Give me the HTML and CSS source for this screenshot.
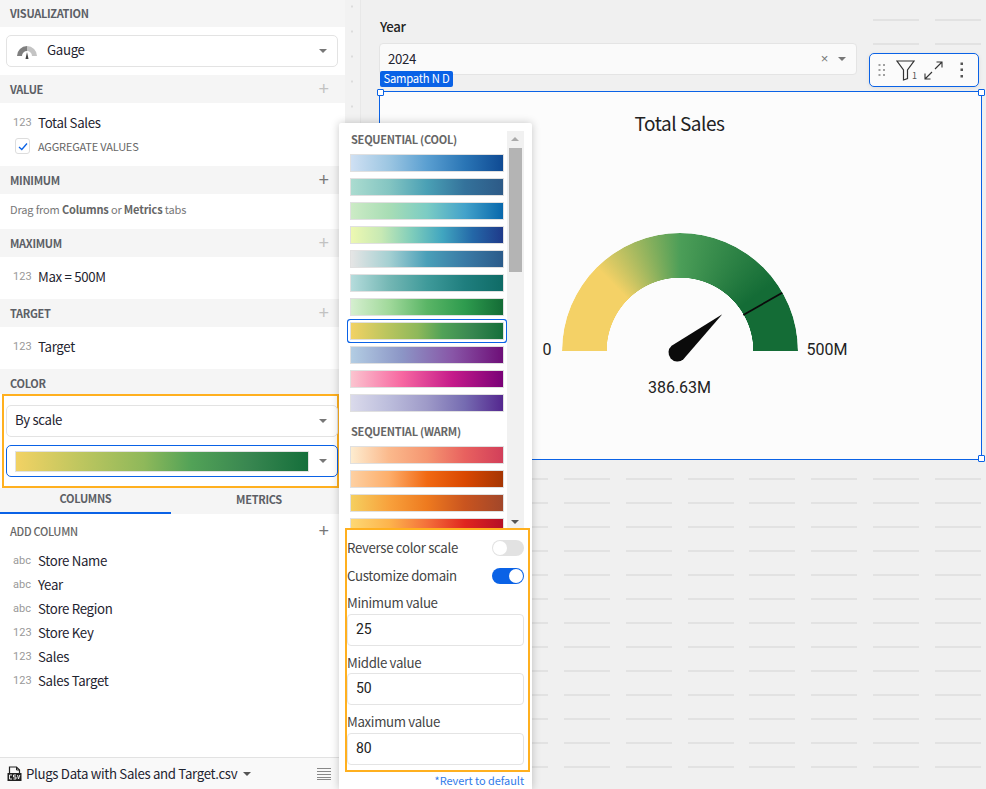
FILE: index.html
```html
<!DOCTYPE html>
<html lang="en">
<head>
<meta charset="utf-8">
<title>Gauge settings</title>
<link rel="stylesheet" href="styles.css">
</head>
<body>
<div class="app">
  <aside class="panel">
    <div class="head">VISUALIZATION</div>
    <div class="body-select">
      <div class="select">
        <svg class="gauge-icon" width="20" height="15" viewBox="0 0 20 15"><path d="M0 12 A10 10 0 0 1 10 2 V7 A5 5 0 0 0 5 12 Z" fill="#7f7f7f"/><path d="M10 2 A10 10 0 0 1 20 12 H15 A5 5 0 0 0 10 7 Z" fill="#c4c4c4"/><path d="M10 8 L11.500 15 H8.500 Z" fill="#444"/></svg>
        <span class="sel-text">Gauge</span><i class="caret"></i>
      </div>
    </div>
    <div class="head">VALUE<b class="plus faint">+</b></div>
    <div class="body-value">
      <div class="field"><span class="type">123</span>Total Sales</div>
      <div class="check-row">
        <span class="check"><svg width="10" height="9" viewBox="0 0 10 9"><path d="M1 5 L3.800 7.500 L9 1.500" fill="none" stroke="#0a62e6" stroke-width="1.300"/></svg></span>AGGREGATE VALUES
      </div>
    </div>
    <div class="head">MINIMUM<b class="plus">+</b></div>
    <div class="hint">Drag from <b>Columns</b> or <b>Metrics</b> tabs</div>
    <div class="head">MAXIMUM<b class="plus faint">+</b></div>
    <div class="body-one"><div class="field"><span class="type">123</span>Max = 500M</div></div>
    <div class="head">TARGET<b class="plus faint">+</b></div>
    <div class="body-one"><div class="field"><span class="type">123</span>Target</div></div>
    <div class="head head-color">COLOR</div>
    <div class="color-box">
      <div class="select"><span class="plain">By scale</span><i class="caret"></i></div>
      <div class="select focus"><span class="scale-preview"></span><i class="caret"></i></div>
    </div>
    <div class="tabs">
      <div class="tab active">COLUMNS</div>
      <div class="tab second">METRICS</div>
    </div>
    <div class="add-col">ADD COLUMN<b class="plus">+</b></div>
    <div class="field"><span class="type">abc</span>Store Name</div>
    <div class="field"><span class="type">abc</span>Year</div>
    <div class="field"><span class="type">abc</span>Store Region</div>
    <div class="field"><span class="type">123</span>Store Key</div>
    <div class="field"><span class="type">123</span>Sales</div>
    <div class="field"><span class="type">123</span>Sales Target</div>
    <div class="foot">
      <svg width="15" height="16" viewBox="0 0 15 16"><path d="M2.500 7 V1 H9.500 L12.500 4 V7" fill="none" stroke="#222" stroke-width="1.200"/><path d="M9.500 1 V4 H12.500" fill="none" stroke="#222"/><rect x="0.500" y="7" width="14" height="8" fill="#222"/><path d="M5 9 H2.500 V13 H5 M9 9 H6.500 V11 H9 V13 H6.500 M10.500 9 L11.500 13 L12.800 9" fill="none" stroke="#fff" stroke-width="0.900"/></svg>
      <span class="foot-name">Plugs Data with Sales and Target.csv</span><i class="caret dark"></i>
      <svg class="list-icon" width="14" height="12" viewBox="0 0 14 12"><path d="M0 .5 H14 M0 3.500 H14 M0 6.500 H14 M0 9.500 H14 M0 11.500 H14" stroke="#888" stroke-width="1"/></svg>
    </div>
  </aside>

  <main class="canvas">
    <div class="ruler"></div>
    <div class="sheet">
      <div class="dashes top"></div>
      <div class="dashes bottom"></div>
      <div class="filter-label">Year</div>
      <div class="filter">
        <span>2024</span><span class="clear">×</span><i class="caret"></i>
      </div>
      <div class="badge">Sampath N D</div>
      <div class="toolbar">
        <svg width="8" height="14" viewBox="0 0 8 14"><path d="M.5 1 H2.500 V3 H.5 Z M5 1 H7 V3 H5 Z M.5 6 H2.500 V8 H.5 Z M5 6 H7 V8 H5 Z M.5 11 H2.500 V13 H.5 Z M5 11 H7 V13 H5 Z" fill="#a0a0a0"/></svg>
        <span class="filter-icon"><svg width="19" height="21" viewBox="0 0 19 21"><path d="M1 1 H18 L11.500 10 V18.500 L7.500 20 V10 Z" fill="none" stroke="#333" stroke-width="1.200"/></svg><em>1</em></span>
        <svg width="19" height="19" viewBox="0 0 19 19"><path d="M11 8 L18 1 M12.500 1 H18 V6.500 M8 11 L1 18 M1 12.500 V18 H6.500" fill="none" stroke="#333" stroke-width="1.100"/></svg>
        <svg class="dots" width="4" height="16" viewBox="0 0 4 16"><path d="M.5 .5 H3 V3 H.5 Z M.5 6.500 H3 V9 H.5 Z M.5 13 H3 V15.500 H.5 Z" fill="#555"/></svg>
      </div>
      <section class="chart">
        <i class="handle tl"></i><i class="handle tr"></i><i class="handle br"></i>
        <h2 class="chart-title">Total Sales</h2>
        <div class="gauge-row">
          <span class="g-min">0</span>
          <div class="gauge">
            <div class="arc"></div>
            <svg class="needle" width="250" height="140" viewBox="555 225 250 140"><path d="M743.300 314 L782.300 291.700" stroke="#0b0b0b" stroke-width="1.800"/><path d="M722.300 313.300 L683.400 358.300 A9 9 0 1 1 671.600 344.700 Z" fill="#0b0b0b"/></svg>
          </div>
          <span class="g-max">500M</span>
        </div>
        <div class="g-value">386.63M</div>
      </section>
    </div>
  </main>

  <div class="popup">
    <div class="scale-area">
      <div class="scale-list">
        <div class="group-title">SEQUENTIAL (COOL)</div>
        <div class="swatches">
          <div class="swatch c1"></div><div class="swatch c2"></div><div class="swatch c3"></div><div class="swatch c4"></div>
          <div class="swatch c5"></div><div class="swatch c6"></div><div class="swatch c7"></div><div class="swatch c8 sel"></div>
          <div class="swatch c9"></div><div class="swatch c10"></div><div class="swatch c11"></div>
        </div>
        <div class="group-title warm">SEQUENTIAL (WARM)</div>
        <div class="swatches">
          <div class="swatch w1"></div><div class="swatch w2"></div><div class="swatch w3"></div><div class="swatch w4"></div>
        </div>
      </div>
      <div class="scrollbar">
        <i class="sb-up"></i><div class="sb-thumb"></div><i class="sb-down"></i>
      </div>
    </div>
    <div class="domain-box">
      <div class="toggle-row"><span>Reverse color scale</span><span class="toggle"></span></div>
      <div class="toggle-row"><span>Customize domain</span><span class="toggle on"></span></div>
      <label class="dlabel first">Minimum value</label><div class="dinput">25</div>
      <label class="dlabel">Middle value</label><div class="dinput">50</div>
      <label class="dlabel">Maximum value</label><div class="dinput">80</div>
    </div>
    <div class="revert">*Revert to default</div>
  </div>
</div>
</body>
</html>
```
FILE: styles.css
```css
* { box-sizing: border-box; }
html, body { margin: 0; height: 100%; }
body {
  font-family: "Noto Sans CJK SC", "Source Sans Pro", "Noto Sans", sans-serif;
  font-size: 13.250px;
  letter-spacing: -.33px;
  color: #1f2430;
  background: #f0f0f0;
  overflow: hidden;
}
.app { display: flex; position: relative; width: 986px; height: 789px; overflow: hidden; }

/* left panel */
.panel { width: 345px; height: 789px; background: #fff; display: flex; flex-direction: column; flex: none; }
.head {
  height: 28px; background: #f5f5f5; padding: 0 10px; display: flex; align-items: center;
  justify-content: space-between; font-size: 11px; letter-spacing: -.3px; font-weight: 700; color: #5c5f66; line-height: 28px; flex: none;
}
.head:first-child { height: 27px; line-height: 25px; }
.plus { font-weight: 400; font-size: 18px; color: #777; margin-right: 6px; line-height: 20px; font-family: "Liberation Sans", sans-serif; letter-spacing: 0; }
.plus.faint { color: #c2c2c2; }
.body-select { padding: 8px 7px 8px 6px; height: 48px; flex: none; }
.select {
  height: 32px; border: 1px solid #e3e3e3; border-radius: 5px; background: #fff;
  display: flex; align-items: center; padding-left: 8px; position: relative;
}
.gauge-icon { margin: 0 0 0 2px; }
.sel-text { margin: -3px 0 0 10px; line-height: 20px; }
.plain { line-height: 20px; margin-top: -3px; }
.caret {
  width: 0; height: 0; border: 4px solid transparent; border-top: 4.500px solid #777; border-bottom: 0;
  margin-left: auto; margin-right: 10px; display: block; flex: none;
}
.caret.dark { margin-left: 6px; margin-right: 0; border-top-color: #555; }
.body-value { height: 63px; padding-top: 7px; flex: none; }
.field { display: flex; align-items: center; height: 24px; padding: 1px 0 0 13px; line-height: 24px; flex: none; }
.type { width: 25px; font-family: Roboto, sans-serif; font-size: 11px; color: #999; flex: none; letter-spacing: .1px; }
.check-row { display: flex; align-items: center; height: 24px; padding-left: 15px; font-size: 11px; letter-spacing: -.2px; color: #666; line-height: 24px; }
.check {
  width: 15px; height: 16px; border: 1px solid #ddd; border-radius: 3px; margin-right: 8px;
  display: flex; align-items: center; justify-content: center;
}
.hint { height: 35px; flex: none; padding: 0 10px; font-size: 11px; letter-spacing: -.15px; line-height: 31px; color: #777; }
.hint b { font-weight: 700; color: #666; }
.body-one { height: 42px; padding-top: 7px; flex: none; }
.head-color { height: 25px; line-height: 28px; align-items: flex-start; }
.color-box {
  height: 94px; margin: 0 6px 0 2px; width: 337px; border: 2px solid #ffb01f; background: #fff;
  padding: 9px 0 0 2px; flex: none;
}
.color-box .select { width: 332px; padding-left: 8px; }
.color-box .select + .select { margin-top: 8px; }
.select.focus { border-color: #0a62e6; }
.scale-preview {
  width: 294px; height: 21px; border: 1px solid #e2e2e2;
  background: linear-gradient(to right, #f2d264, #bec65f 22%, #8eb85a 44%, #52a257 60%, #388650 80%, #156f3b);
}
.tabs { height: 26px; background: #f5f5f5; display: flex; flex: none; font-size: 11px; letter-spacing: -.3px; font-weight: 700; color: #5c5f66; }
.tab { width: 172px; text-align: center; line-height: 20px; height: 26px; }
.tab.active { border-bottom: 2px solid #0a62e6; }
.tab.second { line-height: 22px; width: 175px; padding-left: 2px; }
.add-col {
  height: 34px; padding: 0 10px; display: flex; align-items: center; justify-content: space-between;
  font-size: 11px; letter-spacing: -.3px; font-weight: 500; color: #666; flex: none; line-height: 34px;
}
.foot {
  margin-top: auto; height: 32px; border-top: 1px solid #e2e2e2; background: #f9f9f9; display: flex; align-items: center;
  padding: 0 14px 0 7px; flex: none; line-height: 20px;
}
.foot-name { margin: 1px 0 0 4px; }
.list-icon { margin-left: auto; }

/* canvas */
.canvas { flex: 1; display: flex; height: 789px; background: #f0f0f0; }
.ruler {
  width: 16px; flex: none; background-color: #f2f2f2; border-right: 1px solid #e8e8e8;
  background-image: radial-gradient(circle, #dcdcdc 1px, transparent 1.200px);
  background-size: 16px 25px; background-position: -1px -6px;
}
.sheet { flex: 1; position: relative; padding: 18px 5px 0 18px; }
.dashes {
  position: absolute;
  background: repeating-linear-gradient(to bottom, #e2e2e2 0 2px, transparent 2px 24px);
  -webkit-mask-image: repeating-linear-gradient(to right, #000 0 46px, transparent 46px 61.750px);
  mask-image: repeating-linear-gradient(to right, #000 0 46px, transparent 46px 61.750px);
}
.dashes.top { left: 512px; top: 19px; width: 108px; height: 26px; }
.dashes.bottom { left: 17.750px; top: 478px; width: 602px; height: 311px; }
.filter-label { font-weight: 500; line-height: 18px; color: #222; position: relative; padding-left: 1px; }
.filter {
  position: relative; width: 478px; height: 32px; margin-top: 7px; border: 1px solid #e4e4e4; border-radius: 4px;
  background: #fafafa; display: flex; align-items: center; padding-left: 8px; line-height: 20px;
}
.clear { margin-left: auto; color: #777; font-family: "Liberation Sans", sans-serif; font-size: 13px; margin-right: 0; }
.filter .caret { margin-left: 10px; margin-right: 10px; }
.badge {
  position: absolute; left: 19px; top: 71px; width: 73px; height: 16px; background: #0a62e6; color: #fff; font-size: 11.250px;
  line-height: 15px; text-align: center; border-radius: 2px; z-index: 3; letter-spacing: -.2px;
}
.toolbar {
  position: absolute; left: 508px; top: 53px; width: 110px; height: 34px; background: #fbfbfb; border: 1.500px solid #0a62e6;
  border-radius: 5px; display: flex; align-items: center; padding-left: 8px; z-index: 3; box-shadow: 0 1px 4px rgba(0,0,0,.08);
}
.filter-icon { position: relative; margin-left: 10px; width: 20px; height: 21px; display: block; }
.filter-icon em { position: absolute; left: 16px; top: 11px; font-style: normal; font-size: 9px; line-height: 10px; color: #555; }
.toolbar > svg:nth-of-type(2) { margin-left: 8px; }
.dots { margin-left: 17px; }
.chart {
  position: relative; width: 603px; height: 369px; margin-top: 16px; margin-left: 0;
  background: #fcfcfc; border: 1.500px solid #0a62e6; display: flex; flex-direction: column; align-items: center;
}
.handle { position: absolute; width: 7px; height: 7px; border: 1.500px solid #0a62e6; background: #fff; border-radius: 1px; z-index: 2; }
.tl { left: -3px; top: -3px; }
.tr { right: -4px; top: -3px; }
.br { right: -4px; bottom: -3px; }
.chart-title { margin: 17px 2px 0 0; font-size: 19px; letter-spacing: -.45px; font-weight: 400; line-height: 28px; color: #222; }
.gauge-row { display: flex; align-items: flex-end; margin: 96px 2px 0 0; font-family: Roboto, sans-serif; font-size: 16px; letter-spacing: 0; color: #222; }
.gauge { position: relative; width: 236px; height: 118px; }
.arc {
  width: 236px; height: 118px; border-radius: 118px 118px 0 0;
  background: conic-gradient(from -90deg at 50% 100%, #f4d166 0deg, #f4d166 45deg, #4c9e58 90deg, #146c36 144deg, #146c36 180deg, #146c36 360deg);
  -webkit-mask-image: radial-gradient(circle at 50% 100%, transparent 73px, #000 73.500px);
  mask-image: radial-gradient(circle at 50% 100%, transparent 73px, #000 73.500px);
}
.needle { position: absolute; left: -7px; top: -7px; overflow: visible; }
.g-min { width: 60px; padding-right: 10px; text-align: right; line-height: 18px; margin-bottom: -8px; }
.g-max { width: 60px; padding-left: 9px; line-height: 18px; margin-bottom: -8px; }
.g-value { font-family: Roboto, sans-serif; font-size: 16px; letter-spacing: 0; line-height: 18px; color: #222; margin: 28px 2px 0 0; }

/* popup */
.popup {
  position: absolute; left: 339px; top: 123px; width: 193px; height: 666px; background: #fff;
  box-shadow: 0 0 8px rgba(0,0,0,.22); z-index: 5; border-radius: 2px 2px 0 0;
}
.scale-area { height: 405px; display: flex; overflow: hidden; }
.scale-list { width: 168px; padding: 8px 0 0 11px; overflow: hidden; height: 405px; flex: none; }
.group-title { font-size: 11px; letter-spacing: -.25px; font-weight: 700; color: #666; line-height: 16px; margin: 0 0 7px 1px; }
.group-title.warm { margin-top: 11px; }
.swatches { display: flex; flex-direction: column; gap: 6px; }
.swatch { width: 154px; height: 18px; border: 1px solid #e0e0e0; flex: none; }
.swatch.sel { box-shadow: 0 0 0 2px #fff, 0 0 0 3px #0a62e6; border-radius: 1px; }
.c1 { background: linear-gradient(to right, #cfe0f3, #9cc6e2, #5a9fd1, #2a75b5, #0f4a93); }
.c2 { background: linear-gradient(to right, #abdcd0, #84c5c2, #4aa0b5, #34729b, #2d5a87); }
.c3 { background: linear-gradient(to right, #ccebc5, #a8ddb5, #7bccc4, #43a2ca, #0868ac); }
.c4 { background: linear-gradient(to right, #edf8b1, #c7e9b4, #7fcdbb, #41a6c0, #2468a8, #1f3a8a); }
.c5 { background: linear-gradient(to right, #e5e5e5, #a5d0d2, #4a9fb8, #3a7aa5, #2b5b8a); }
.c6 { background: linear-gradient(to right, #b5dcdc, #74b7b4, #3f9a9a, #1f7e7e, #0f6b66); }
.c7 { background: linear-gradient(to right, #d5efcf, #a1d99b, #5ab566, #2e9b4e, #146c36); }
.c8 { background: linear-gradient(to right, #f2d264, #bec65f 22%, #8eb85a 44%, #52a257 60%, #388650 80%, #156f3b); }
.c9 { background: linear-gradient(to right, #b3cde3, #8c96c6, #8856a7, #6e0f78); }
.c10 { background: linear-gradient(to right, #fbc4cf, #f768a1, #c51b8a, #7a0177); }
.c11 { background: linear-gradient(to right, #dadaeb, #bcbddc, #9e9ac8, #756bb1, #54278f); }
.w1 { background: linear-gradient(to right, #fdeccf, #fbb98c, #f59671, #e8615f, #d23f5a); }
.w2 { background: linear-gradient(to right, #fdd0a2, #fdae6b, #f16913, #d94801, #a63603); }
.w3 { background: linear-gradient(to right, #f5cf5f, #f8a13c, #ee7a1f, #c9541f, #a2472a); }
.w4 { background: linear-gradient(to right, #fdd873, #fdb44d, #f4703a, #e0261f, #b50f26); }
.scrollbar {
  width: 17px; height: 397px; margin-top: 8px; background: #f1f1f1; position: relative; padding-top: 17px;
}
.sb-thumb { width: 13px; height: 124px; margin-left: 2px; background: #b4b4b4; }
.sb-up, .sb-down { position: absolute; left: 4px; width: 0; height: 0; border: 4px solid transparent; border-top: 0; }
.sb-up { top: 6px; border-bottom: 4px solid #aaa; }
.sb-down { bottom: 4px; border-bottom: 0; border-top: 4px solid #555; }
.domain-box { margin-left: 6px; width: 185px; height: 244px; border: 2px solid #ffb01f; background: #fff; padding: 4px 4px 0 0; position: relative; }
.toggle-row { display: flex; align-items: center; justify-content: space-between; height: 28px; line-height: 28px; color: #444; }
.toggle-row span:first-child { margin-top: -1px; }
.toggle { width: 32px; height: 16px; border-radius: 8px; background: #e2e2e2; position: relative; display: block; }
.toggle::after { content: ""; position: absolute; left: 1px; top: 1px; width: 14px; height: 14px; border-radius: 50%; background: #fff; }
.toggle.on { background: #0a62e6; }
.toggle.on::after { left: 17px; }
.dlabel { display: block; line-height: 18px; height: 18px; color: #444; margin-top: 8px; }
.dlabel.first { margin-top: 4px; }
.dinput {
  height: 32px; border: 1px solid #e4e4e4; border-radius: 4px; padding-left: 8px; margin-top: 1.500px;
  font-family: Roboto, sans-serif; font-size: 14px; letter-spacing: 0; line-height: 29px; color: #222; background: #fff;
}
.revert { text-align: right; font-size: 11px; letter-spacing: -.05px; color: #2f7bea; line-height: 16px; padding: 0 8px 0 0; }
```
